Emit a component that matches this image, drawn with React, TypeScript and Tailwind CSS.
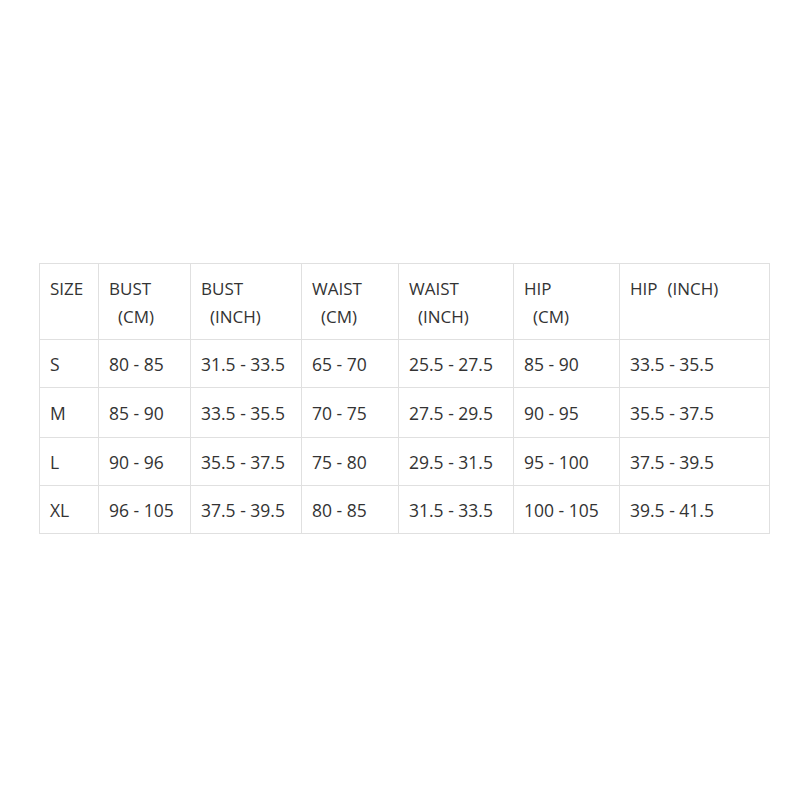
const headers: { top: string; sub?: string; inline?: boolean }[] = [
    { top: "SIZE" },
    { top: "BUST", sub: "(CM)" },
    { top: "BUST", sub: "(INCH)" },
    { top: "WAIST", sub: "(CM)" },
    { top: "WAIST", sub: "(INCH)" },
    { top: "HIP", sub: "(CM)" },
    { top: "HIP", sub: "(INCH)", inline: true },
];

const widths = ["w-[59px]", "w-[92px]", "w-[111px]", "w-[97px]", "w-[115px]", "w-[106px]", "w-[150px]"];
const heights = ["h-[48px]", "h-[50px]", "h-[48px]", "h-[48px]"];

const rows = [
    ["S", "80 - 85", "31.5 - 33.5", "65 - 70", "25.5 - 27.5", "85 - 90", "33.5 - 35.5"],
    ["M", "85 - 90", "33.5 - 35.5", "70 - 75", "27.5 - 29.5", "90 - 95", "35.5 - 37.5"],
    ["L", "90 - 96", "35.5 - 37.5", "75 - 80", "29.5 - 31.5", "95 - 100", "37.5 - 39.5"],
    ["XL", "96 - 105", "37.5 - 39.5", "80 - 85", "31.5 - 33.5", "100 - 105", "39.5 - 41.5"],
];

export default function App() {
    return (
        <div className="w-[800px] h-[800px] bg-white flex items-start pt-[263px] pl-[39px] text-[#333]"
            style={{ fontFamily: '"Open Sans", "Noto Sans CJK SC", sans-serif' }}>
            <table className="border-collapse table-fixed w-[731px]">
                <thead>
                    <tr className="h-[76px]">
                        {headers.map((h, i) => (
                            <th key={i} className={`${widths[i]} border border-[#e0e0e0] align-top text-left font-normal text-[17px] leading-[28px] pl-[10px] pt-[11px] whitespace-nowrap`}>
                                {h.top}
                                {h.sub && !h.inline && <br />}
                                {h.sub && <span className={h.inline ? "ml-[10px]" : "ml-[9px]"}>{h.sub}</span>}
                            </th>
                        ))}
                    </tr>
                </thead>
                <tbody>
                    {rows.map((r, ri) => (
                        <tr key={ri} className={heights[ri]}>
                            {r.map((c, ci) => (
                                <td key={ci} className="border border-[#e0e0e0] text-[17.5px] pl-[10px] pt-[2px] whitespace-nowrap">{c}</td>
                            ))}
                        </tr>
                    ))}
                </tbody>
            </table>
        </div>
    );
}
